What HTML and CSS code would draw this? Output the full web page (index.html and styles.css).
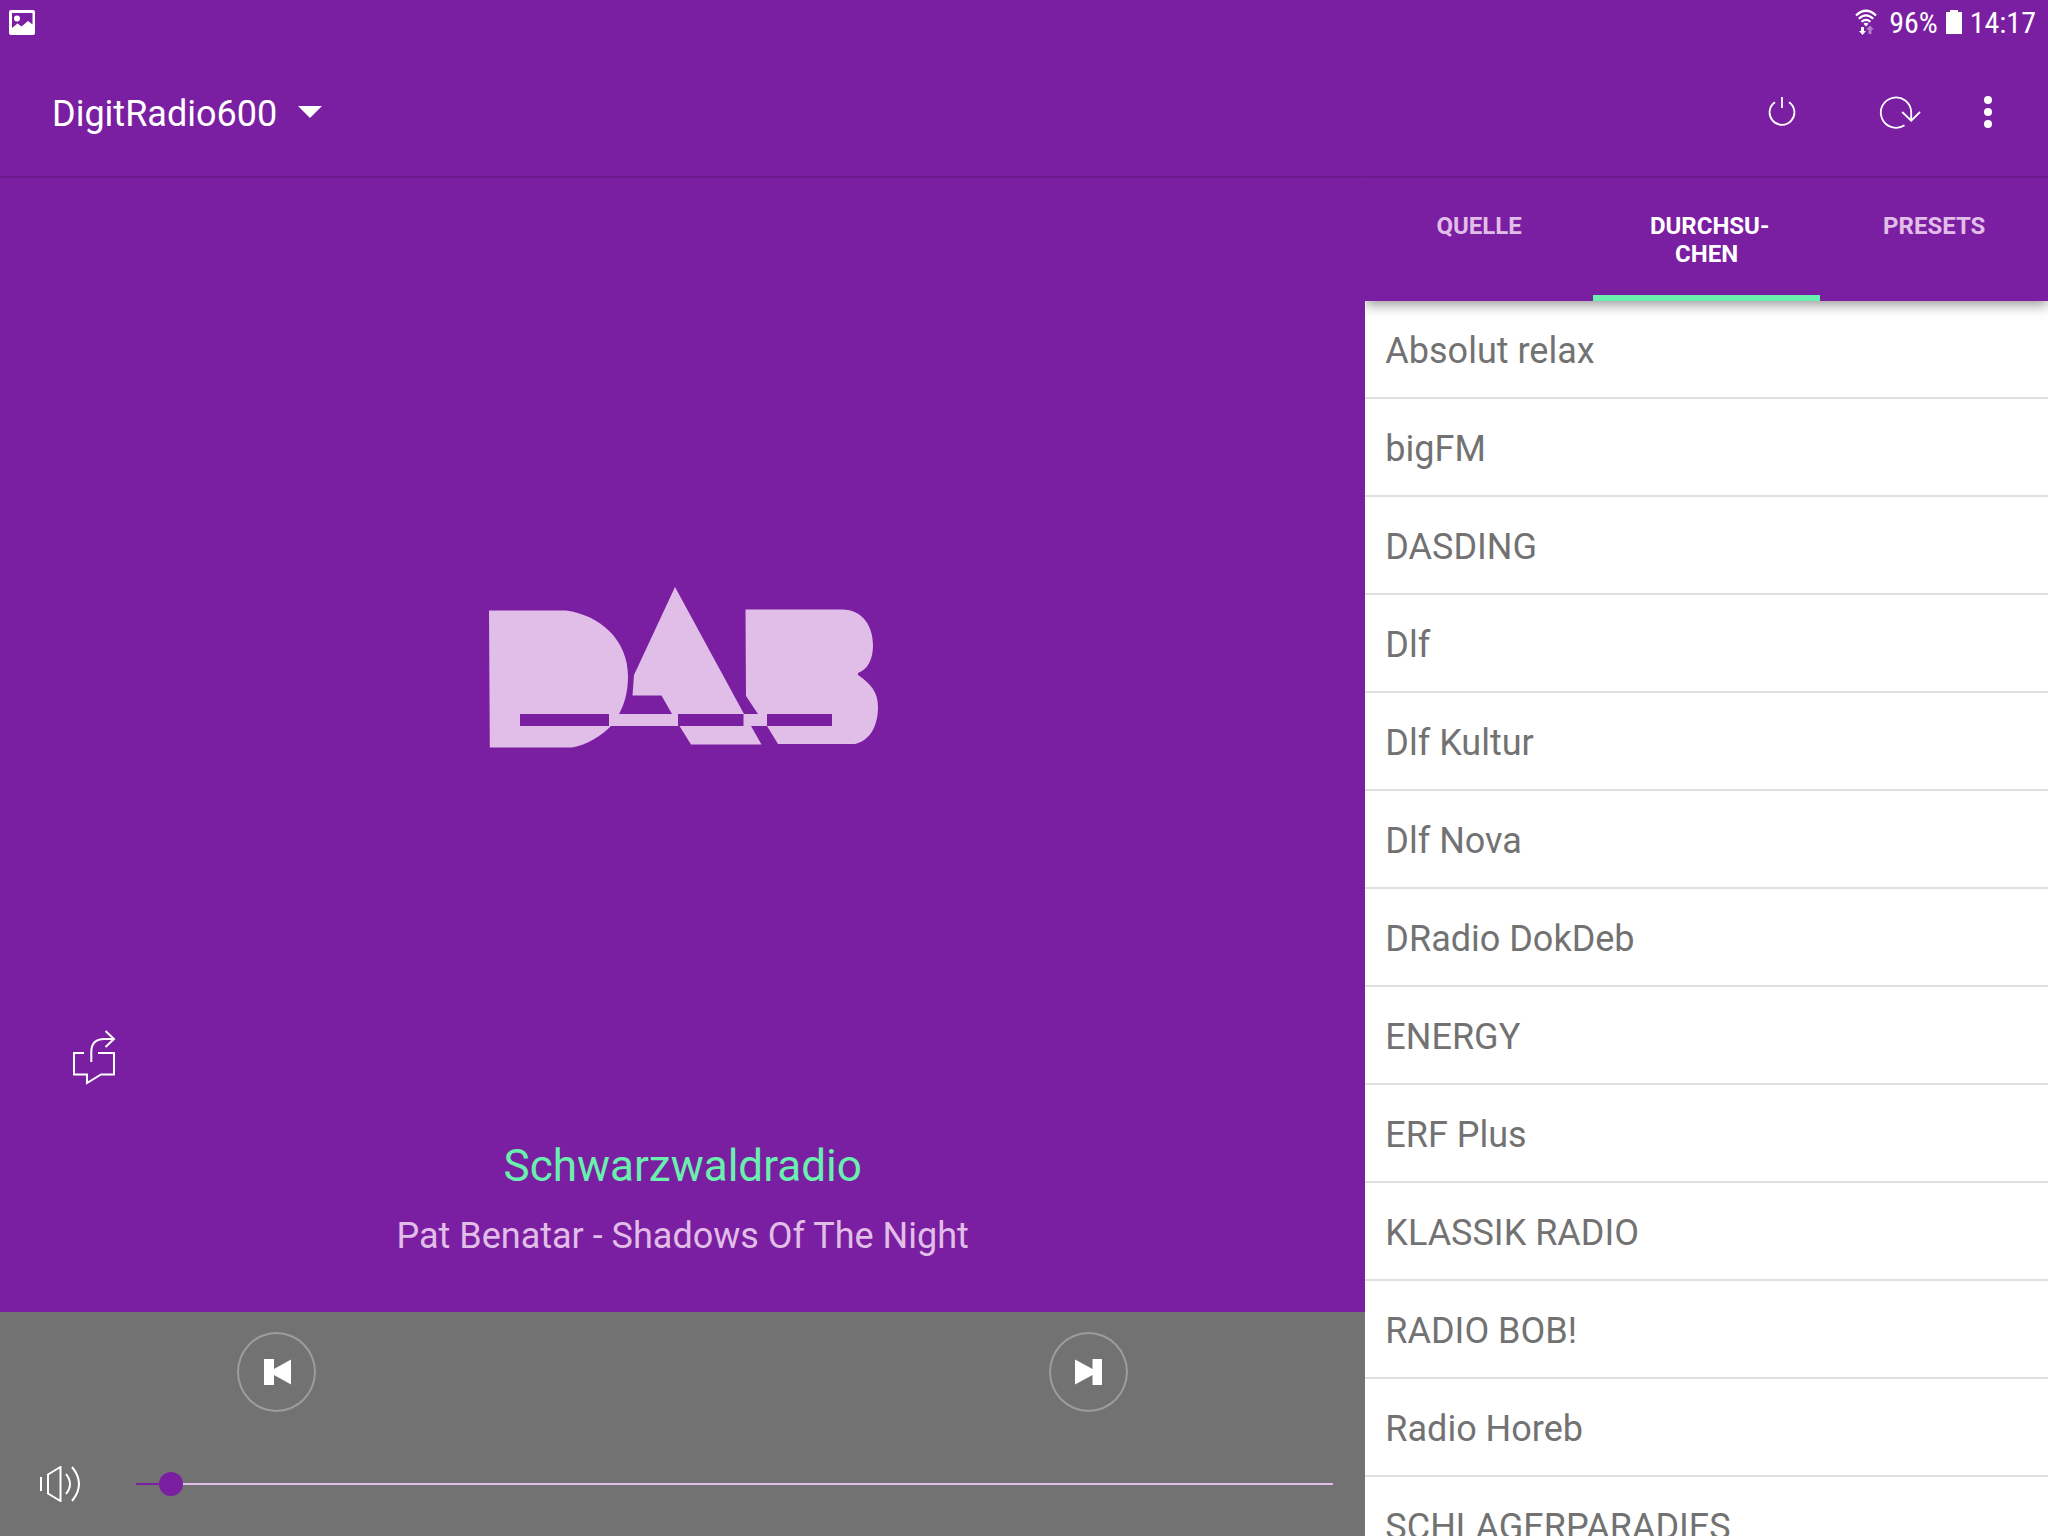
FILE: index.html
```html
<!DOCTYPE html>
<html lang="de">
<head>
    <meta charset="UTF-8">
    <meta name="viewport" content="width=device-width, initial-scale=1.0">
    <title>DigitRadio600</title>
    <link rel="stylesheet" href="styles.css">
</head>
<body>
    <!-- Statusleiste -->
    <div class="status-bar">
        <svg class="status-image" viewBox="0 0 26 25" width="26" height="25" aria-hidden="true">
            <path fill="#fff" fill-rule="evenodd" d="M2 0h22a2 2 0 0 1 2 2v21a2 2 0 0 1-2 2H2a2 2 0 0 1-2-2V2a2 2 0 0 1 2-2zM3 3v15l5.500-4.500 4 3L19 11l4.500 3.500V3z"/>
            <circle cx="8" cy="8.500" r="3" fill="#fff"/>
        </svg>
        <div class="status-right">
            <svg viewBox="0 0 22 26" width="22" height="26" aria-hidden="true">
                <g fill="none" stroke="#fff" stroke-width="2.200">
                    <path d="M1 6.500q10-9.500 20 0"/>
                    <path d="M3.800 9.800q7.200-6.800 14.400 0"/>
                    <path d="M6.500 12.800q4.500-4 9 0"/>
                </g>
                <path fill="#fff" d="M8.500 14.800q2.500-2 5 0L11 17.500zM6 18h3v4h2l-3.500 4L4 22h2z"/>
                <path fill="#b57fca" d="M13.500 25h3v-4.500h2.500L15 16.500l-4 4h2.500z"/>
            </svg>
            <span>96%</span>
            <svg viewBox="0 0 16 24" width="16" height="24" aria-hidden="true">
                <path fill="#fff" d="M4 0h8v2h4v22H0V2h4z"/>
            </svg>
            <span>14:17</span>
        </div>
    </div>

    <header>
        <label class="device">
            <select aria-label="Gerät">
                <option>DigitRadio600</option>
            </select>
            <svg viewBox="0 0 24 12" width="24" height="12" aria-hidden="true"><path fill="#fff" d="M0 0h24L12 12z"/></svg>
        </label>
        <div class="actions">
            <button type="button" aria-label="Ein/Aus">
                <svg viewBox="0 0 48 48" width="48" height="48">
                    <path fill="none" stroke="#fff" stroke-width="1.800" d="M24 9v11M17 14.200a12.400 12.400 0 1 0 14 0"/>
                </svg>
            </button>
            <button type="button" class="refresh" aria-label="Aktualisieren">
                <svg viewBox="0 0 48 48" width="48" height="48">
                    <path fill="none" stroke="#fff" stroke-width="1.800" d="M28.500 37.200A15.200 15.200 0 1 1 35.200 24v8.500M26.200 24l9 8.700 8.800-8.700"/>
                </svg>
            </button>
            <button type="button" class="more" aria-label="Mehr">
                <svg viewBox="0 0 48 48" width="48" height="48" fill="#fff">
                    <circle cx="24" cy="12" r="4"/>
                    <circle cx="24" cy="24" r="4"/>
                    <circle cx="24" cy="36" r="4"/>
                </svg>
            </button>
        </div>
    </header>

    <main>
        <section class="player">
            <div class="artwork">
                <svg viewBox="0 0 390 162" width="390" height="162" role="img" aria-label="DAB">
                    <g fill="#e1bee7">
                        <path d="M0 23.500h77C111 28 139 53 139 89c0 15-3 27-9 38h53l-10.500-18.500H143.500L145 88 186 0 255 127h14l-12-18-.5-86.500H353c21 0 31 17 31 36 0 13-5 24-15 27.500v2c13 9 20 17 20 32 0 20-9 34-23 37h-77L278 139h-16l10.500 18.500H202L190.500 139H122c-10 10-24 19-39 21.500H.8z"/>
                    </g>
                    <path fill="#7b1fa2" d="M31 127h89v12H31zM189 127h65.500v12H189zM278 127h65v12h-65z"/>
                </svg>
            </div>
            <button type="button" class="share" aria-label="Teilen">
                <svg viewBox="0 0 44 56" width="44" height="56">
                    <path fill="none" stroke="#fff" stroke-width="2" d="M12 23H2v21.500h13V53l14-8.500h13V23H26M19.300 32V22q0-13 13-13H42M33.500 1l8.500 8-8.500 8"/>
                </svg>
            </button>
            <div class="now-playing">
                <h1>Schwarzwaldradio</h1>
                <p>Pat Benatar - Shadows Of The Night</p>
            </div>
            <div class="controls">
                <div class="skip-buttons">
                    <button type="button" aria-label="Zurück">
                        <svg viewBox="0 0 28 28" width="28" height="28"><path fill="#fff" d="M1 1h10v10l17-9.500v25L11 17v10H1z"/></svg>
                    </button>
                    <button type="button" aria-label="Weiter">
                        <svg viewBox="0 0 28 28" width="28" height="28"><path fill="#fff" d="M27 1H17.500v10L0 1.500v25L17.500 17v10H27z"/></svg>
                    </button>
                </div>
                <div class="volume">
                    <label for="volume" aria-label="Lautstärke">
                        <svg viewBox="0 0 44 36" width="44" height="36">
                            <path fill="none" stroke="#fff" stroke-width="2" d="M3 11v14M10 8.500 22.500 1v34L10 27.500zM28 8q8 10 0 20M34 1q14 17 0 34"/>
                        </svg>
                    </label>
                    <input type="range" id="volume" min="0" max="100" value="2">
                </div>
            </div>
        </section>

        <section class="browser">
            <nav class="tabs">
                <button type="button"><span>QUELLE</span></button>
                <button type="button" class="active"><span>&nbsp;DURCHSU-<br>CHEN</span></button>
                <button type="button"><span>PRESETS</span></button>
            </nav>
            <ul class="stations">
                <li><a href="#">Absolut relax</a></li>
                <li><a href="#">bigFM</a></li>
                <li><a href="#">DASDING</a></li>
                <li><a href="#">Dlf</a></li>
                <li><a href="#">Dlf Kultur</a></li>
                <li><a href="#">Dlf Nova</a></li>
                <li><a href="#">DRadio DokDeb</a></li>
                <li><a href="#">ENERGY</a></li>
                <li><a href="#">ERF Plus</a></li>
                <li><a href="#">KLASSIK RADIO</a></li>
                <li><a href="#">RADIO BOB!</a></li>
                <li><a href="#">Radio Horeb</a></li>
                <li><a href="#">SCHLAGERPARADIES</a></li>
            </ul>
        </section>
    </main>
</body>
</html>
```
FILE: styles.css
```css
* {
    box-sizing: border-box;
}
body {
    margin: 0;
    height: 100vh;
    display: flex;
    flex-direction: column;
    overflow: hidden;
    font-family: Roboto, sans-serif;
    font-size: 36px;
    background-color: #7b1fa2;
    color: #fff;
}
svg {
    display: block;
}
button, select {
    padding: 0;
    border: none;
    background: none;
    color: inherit;
    font: inherit;
    cursor: pointer;
}
.status-bar {
    height: 48px;
    padding: 0 12px 4px 9px;
    display: flex;
    align-items: center;
    justify-content: space-between;
    font-family: "Roboto Condensed", Roboto, sans-serif;
    font-size: 30px;
}
.status-right {
    display: flex;
    align-items: center;
    gap: 8px;
}
.status-right svg:first-child {
    margin-right: 4px;
}
header {
    height: 130px;
    padding: 0 36px 0 52px;
    display: flex;
    align-items: center;
    justify-content: space-between;
    border-bottom: 2px solid #6c1b8f;
}
.device {
    display: flex;
    align-items: center;
    gap: 20px;
}
.device select {
    appearance: none;
    outline: none;
    padding-top: 4px;
    line-height: 44px;
}
.device option {
    color: #333;
}
.actions {
    display: flex;
}
.refresh {
    margin-left: 70px;
}
.more {
    margin-left: 40px;
}
main {
    flex: 1;
    min-height: 0;
    display: grid;
    grid-template-columns: 2fr 1fr;
}
.player {
    display: flex;
    flex-direction: column;
    min-height: 0;
}
.artwork {
    flex: 1;
    display: flex;
    align-items: center;
    justify-content: center;
    padding: 128px 0 0 2px;
}
.share {
    align-self: flex-start;
    margin-left: 72px;
}
.now-playing {
    padding: 50px 24px 52px;
    text-align: center;
}
.now-playing h1 {
    margin: 0 0 16px;
    font-size: 44px;
    font-weight: 400;
    line-height: 60px;
    color: #69f0ae;
}
.now-playing p {
    margin: 0;
    line-height: 48px;
    color: #e1bee7;
}
.controls {
    height: 224px;
    padding-top: 20px;
    background-color: #727272;
}
.skip-buttons {
    display: flex;
    justify-content: space-between;
    padding: 0 237px;
}
.skip-buttons button {
    width: 79px;
    height: 80px;
    display: flex;
    align-items: center;
    justify-content: center;
    border: 2px solid #9c9c9c;
    border-radius: 50%;
}
.volume {
    display: flex;
    align-items: center;
    gap: 54px;
    height: 64px;
    margin-top: 40px;
    padding: 0 32px 0 38px;
}
.volume input {
    appearance: none;
    flex: 1;
    height: 24px;
    margin: 0;
    outline: none;
    background: linear-gradient(#7b1fa2, #7b1fa2) left / 2% 2px no-repeat,
        linear-gradient(#e1bee7, #e1bee7) center / 100% 2px no-repeat;
}
.volume input::-webkit-slider-thumb {
    appearance: none;
    width: 24px;
    height: 24px;
    border-radius: 50%;
    background-color: #7b1fa2;
}
.browser {
    display: flex;
    flex-direction: column;
    min-height: 0;
}
.tabs {
    height: 123px;
    display: grid;
    grid-template-columns: repeat(3, 1fr);
    position: relative;
    background-color: #7b1fa2;
    box-shadow: 0 4px 12px rgba(0, 0, 0, 0.4);
    clip-path: inset(0 0 -20px 0);
}
.tabs button {
    display: flex;
    align-items: flex-start;
    justify-content: center;
    padding-top: 34px;
    font-size: 24px;
    font-weight: 700;
    line-height: 28px;
    color: #e1bee7;
    border-bottom: 6px solid transparent;
}
.tabs .active {
    color: #fff;
    border-bottom-color: #69f0ae;
}
.stations {
    flex: 1;
    min-height: 0;
    margin: 0;
    padding: 0;
    list-style: none;
    overflow: hidden;
    background-color: #fff;
}
.stations a {
    display: block;
    height: 98px;
    padding: 4px 20px 0;
    line-height: 92px;
    border-bottom: 2px solid #e0e0e0;
    color: #727272;
    text-decoration: none;
}
```
